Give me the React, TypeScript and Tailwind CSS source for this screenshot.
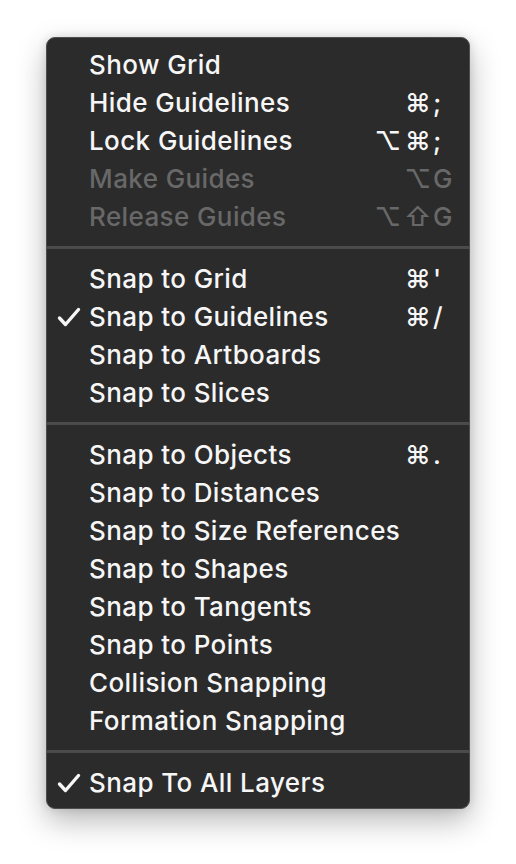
import { Fragment } from 'react';

type Item = {
    label: string;
    mods?: string[];
    keyChar?: string;
    checked?: boolean;
    disabled?: boolean;
};

const groups: Item[][] = [
    [
        { label: 'Show Grid' },
        { label: 'Hide Guidelines', mods: ['⌘'], keyChar: ';' },
        { label: 'Lock Guidelines', mods: ['⌥', '⌘'], keyChar: ';' },
        { label: 'Make Guides', mods: ['⌥'], keyChar: 'G', disabled: true },
        { label: 'Release Guides', mods: ['⌥', '⇧'], keyChar: 'G', disabled: true },
    ],
    [
        { label: 'Snap to Grid', mods: ['⌘'], keyChar: "'" },
        { label: 'Snap to Guidelines', mods: ['⌘'], keyChar: '/', checked: true },
        { label: 'Snap to Artboards' },
        { label: 'Snap to Slices' },
    ],
    [
        { label: 'Snap to Objects', mods: ['⌘'], keyChar: '.' },
        { label: 'Snap to Distances' },
        { label: 'Snap to Size References' },
        { label: 'Snap to Shapes' },
        { label: 'Snap to Tangents' },
        { label: 'Snap to Points' },
        { label: 'Collision Snapping' },
        { label: 'Formation Snapping' },
    ],
    [{ label: 'Snap To All Layers', checked: true }],
];

function Check() {
    return (
        <svg width="24" height="20" viewBox="0 0 24 20" className="shrink-0">
            <path d="M2.5 11 L8.5 17.5 L21.5 2.5" fill="none" stroke="currentColor" strokeWidth="3.4" strokeLinecap="round" strokeLinejoin="round" />
        </svg>
    );
}

export default function App() {
    return (
        <div className="min-h-screen bg-white" style={{ fontFamily: 'Inter, "DejaVu Sans", sans-serif' }}>
            <div className="pl-[46px] pt-[37px]">
                <div className="w-[424px] overflow-hidden rounded-[9px] border border-[#4e4e4e] bg-[#2b2b2b] py-[7px] shadow-[0_12px_30px_rgba(0,0,0,0.28),0_0_10px_rgba(0,0,0,0.12)]">
                    {groups.map((group, gi) => (
                        <Fragment key={gi}>
                            {gi > 0 && (
                                <div className="pt-[11px] pb-[10px]">
                                    <div className="h-[3px] bg-[#4b4b4b]" />
                                </div>
                            )}
                            {group.map((item) => (
                                <div
                                    key={item.label}
                                    className={`flex h-[38px] items-center pt-[2px] text-[26px] font-medium tracking-[0.4px] ${item.disabled ? 'text-[#686868]' : 'text-[#f6f6f6]'}`}
                                >
                                    <div className="flex w-[42px] justify-end pr-[8px]">{item.checked && <Check />}</div>
                                    <span className="flex-1 leading-none">{item.label}</span>
                                    <span className="flex leading-none">
                                        {item.mods?.map((m, i) => (
                                            <span key={i} className="w-[30px] text-center">{m}</span>
                                        ))}
                                    </span>
                                    <span className="w-[36px] leading-none">{item.keyChar}</span>
                                </div>
                            ))}
                        </Fragment>
                    ))}
                </div>
            </div>
        </div>
    );
}
